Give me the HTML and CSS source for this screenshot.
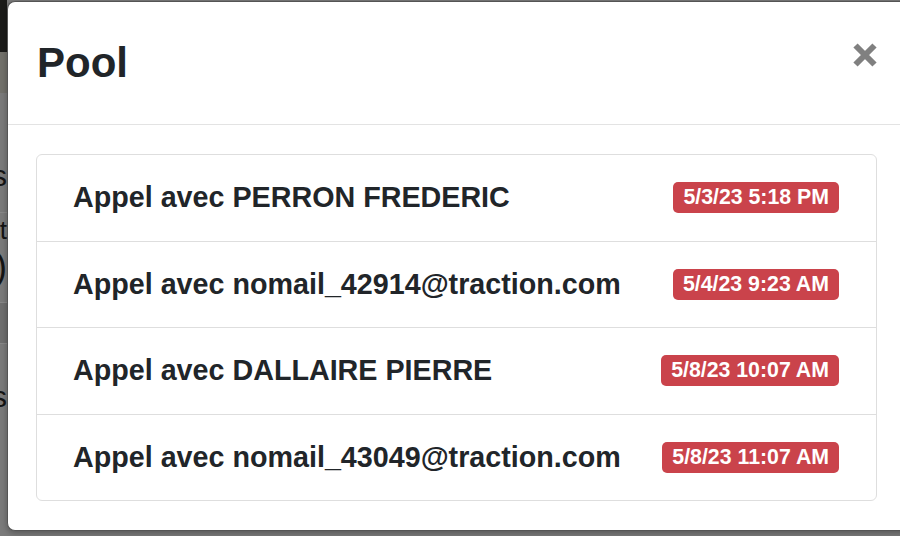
FILE: index.html
```html
<!DOCTYPE html>
<html lang="fr">
<head>
    <meta charset="UTF-8">
    <meta name="viewport" content="width=device-width, initial-scale=1.0">
    <title>Pool</title>
    <link rel="stylesheet" href="styles.css">
</head>
<body>
    <div class="page">
        <div class="navbar"></div>
        <div class="toolbar"></div>
        <div class="row row-first"><span class="cut">s</span></div>
        <div class="row row-second"><span class="cut small">ct</span><span class="cut big">)</span></div>
        <div class="row row-dark"></div>
        <div class="row row-last"><span class="cut">s</span></div>
    </div>

    <div class="modal">
        <div class="modal-header">
            <h2 class="modal-title">Pool</h2>
            <button type="button" class="close" aria-label="Fermer">
                <svg width="24" height="24" viewBox="0 0 24 24">
                    <path d="M2.5 2.5 L21.5 21.5 M21.5 2.5 L2.5 21.5" stroke="#808080" stroke-width="6" fill="none"/>
                </svg>
            </button>
        </div>
        <div class="modal-body">
            <ul class="list-group">
                <li class="list-item">
                    <span>Appel avec PERRON FREDERIC</span>
                    <span class="badge">5/3/23 5:18 PM</span>
                </li>
                <li class="list-item">
                    <span>Appel avec nomail_42914@traction.com</span>
                    <span class="badge">5/4/23 9:23 AM</span>
                </li>
                <li class="list-item">
                    <span>Appel avec DALLAIRE PIERRE</span>
                    <span class="badge">5/8/23 10:07 AM</span>
                </li>
                <li class="list-item">
                    <span>Appel avec nomail_43049@traction.com</span>
                    <span class="badge">5/8/23 11:07 AM</span>
                </li>
            </ul>
        </div>
    </div>
</body>
</html>
```

FILE: styles.css
```css
body {
    margin: 0;
    height: 536px;
    overflow: hidden;
    background-color: #7b7b7b;
    font-family: "Liberation Sans", Arial, sans-serif;
    color: #212529;
}
.page {
    width: 7px;
    overflow: hidden;
}
.navbar {
    height: 52px;
    background-color: #1b1b19;
}
.toolbar {
    height: 41px;
    background-color: #72716b;
}
.row {
    display: flex;
    flex-direction: column;
    align-items: flex-end;
    color: #141414;
    font-size: 30px;
    border-bottom: 1px solid #888;
}
.row-first {
    height: 120px;
    padding-top: 68px;
    box-sizing: border-box;
    background-color: #7a7a7a;
}
.row-second {
    height: 90px;
    padding-top: 2px;
    box-sizing: border-box;
}
.row-dark {
    height: 40px;
    background-color: #6f6f6f;
}
.row-last {
    height: 80px;
    padding-top: 38px;
    box-sizing: border-box;
    border-bottom: none;
}
.cut {
    line-height: 30px;
}
.cut.small {
    font-size: 26px;
}
.cut.big {
    font-size: 36px;
    line-height: 44px;
}
.modal {
    position: absolute;
    top: 1px;
    left: 7px;
    width: 899px;
    background-color: #fff;
    border: 1px solid #555;
    border-right: none;
    border-radius: 8px 0 0 8px;
    box-shadow: 0 2px 6px rgba(0, 0, 0, 0.3);
}
.modal-header {
    display: flex;
    justify-content: space-between;
    align-items: center;
    height: 122px;
    padding: 0 30px 0 29px;
    border-bottom: 1px solid #e3e3e3;
}
.modal-title {
    margin: 0;
    font-size: 42px;
    line-height: 1;
    font-weight: bold;
}
.close {
    margin-bottom: 16px;
    padding: 0;
    background: none;
    border: none;
    cursor: pointer;
}
.close svg {
    display: block;
}
.modal-body {
    padding: 29px 30px 29px 28px;
}
.list-group {
    list-style: none;
    margin: 0;
    padding: 0;
    border: 1px solid #dedede;
    border-radius: 6px;
}
.list-item {
    display: flex;
    justify-content: space-between;
    align-items: center;
    height: 85.5px;
    padding: 0 37px 0 36px;
    font-size: 28.7px;
    font-weight: bold;
    border-top: 1px solid #dedede;
}
.list-item:first-child {
    border-top: none;
}
.badge {
    background-color: #ca434b;
    color: #fff;
    font-size: 21.3px;
    line-height: 31px;
    padding: 0 10px;
    border-radius: 5px;
}
```
